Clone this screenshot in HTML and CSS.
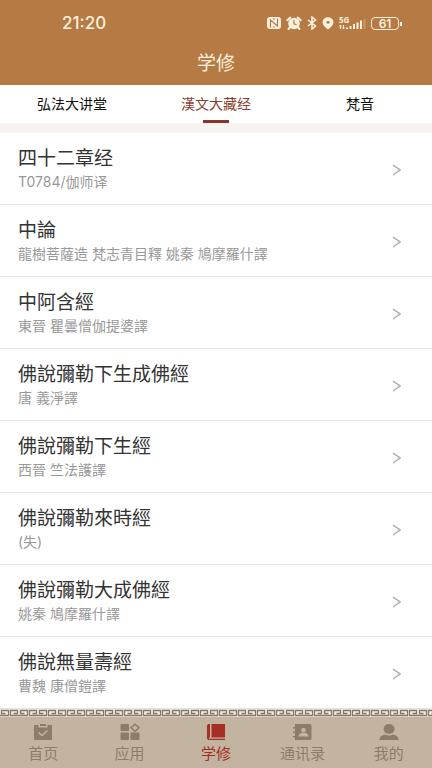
FILE: index.html
```html
<!DOCTYPE html>
<html lang="zh">
<head>
<meta charset="utf-8">
<meta name="viewport" content="width=device-width, initial-scale=1">
<title>学修</title>
<link rel="stylesheet" href="styles.css">
</head>
<body>
<div class="app">
  <header class="header">
    <div class="status">
      <time class="clock">21:20</time>
      <div class="indicators">
        <svg width="14" height="12" viewBox="0 0 14 12" aria-hidden="true"><rect width="14" height="12" rx="3" fill="#fdf0dc"/><path d="M3.500 10.500V3l7 6V1.500M6.500 1.500l1 1M6.500 9.500l1 1" fill="none" stroke="#b67a45" stroke-width="1.200"/></svg>
        <svg width="16" height="14" viewBox="0 0 16 14" aria-hidden="true"><circle cx="8" cy="7.500" r="5.800" fill="#fdf0dc"/><path d="M1.300 4.200 4.300 1.500M14.700 4.200 11.700 1.500M4 11.500 2.500 13M12 11.500l1.500 1.500" stroke="#fdf0dc" stroke-width="2" stroke-linecap="round"/><path d="M8 4.200v3.600l2.500 1" fill="none" stroke="#b67a45" stroke-width="1.200"/></svg>
        <svg width="10" height="14" viewBox="0 0 10 14" aria-hidden="true"><path d="M1 4l7.500 6L5 13V1l3.500 3L1 10" fill="none" stroke="#fdf0dc" stroke-width="1.600"/></svg>
        <svg width="12" height="13" viewBox="0 0 12 13" aria-hidden="true"><path d="M6 12.500C3 10 .5 8 .5 5.200a5.500 4.900 0 0 1 11 0C11.500 8 9 10 6 12.500z" fill="#fdf0dc"/><circle cx="6" cy="5.200" r="1.500" fill="#b67a45"/></svg>
        <svg class="signal" width="27" height="18" viewBox="0 0 27 18" aria-label="5G"><text x="0" y="9" class="signal-text">5G</text><path d="M1.500 11v4M4.500 11v4M.5 12h2M3.500 14h2" stroke="#fdf0dc" stroke-width="1.200"/><path d="M8 13.500V15M11.500 12v3M15 10v5M18.500 8.500V15M22 6.500V15" stroke="#fdf0dc" stroke-width="2"/><path d="M25.500 5v10" stroke="#c99a6b" stroke-width="2"/></svg>
        <span class="battery">61</span>
      </div>
    </div>
    <h1 class="title">学修</h1>
  </header>
  <nav class="tabs">
    <a class="tab" href="#lectures">弘法大讲堂</a>
    <a class="tab tab-active" href="#canon" aria-current="page">漢文大藏经</a>
    <a class="tab" href="#music">梵音</a>
  </nav>
  <main class="list">
    <a class="row" href="#1"><span class="text"><span class="name">四十二章经</span><span class="author">T0784/伽师译</span></span><svg class="chevron" viewBox="0 0 9 12"><path d="M1 1l7 5-7 5"/></svg></a>
    <a class="row" href="#2"><span class="text"><span class="name">中論</span><span class="author">龍樹菩薩造 梵志青目釋 姚秦 鳩摩羅什譯</span></span><svg class="chevron" viewBox="0 0 9 12"><path d="M1 1l7 5-7 5"/></svg></a>
    <a class="row" href="#3"><span class="text"><span class="name">中阿含經</span><span class="author">東晉 瞿曇僧伽提婆譯</span></span><svg class="chevron" viewBox="0 0 9 12"><path d="M1 1l7 5-7 5"/></svg></a>
    <a class="row" href="#4"><span class="text"><span class="name">佛說彌勒下生成佛經</span><span class="author">唐 義淨譯</span></span><svg class="chevron" viewBox="0 0 9 12"><path d="M1 1l7 5-7 5"/></svg></a>
    <a class="row" href="#5"><span class="text"><span class="name">佛說彌勒下生經</span><span class="author">西晉 竺法護譯</span></span><svg class="chevron" viewBox="0 0 9 12"><path d="M1 1l7 5-7 5"/></svg></a>
    <a class="row" href="#6"><span class="text"><span class="name">佛說彌勒來時經</span><span class="author">(失)</span></span><svg class="chevron" viewBox="0 0 9 12"><path d="M1 1l7 5-7 5"/></svg></a>
    <a class="row" href="#7"><span class="text"><span class="name">佛說彌勒大成佛經</span><span class="author">姚秦 鳩摩羅什譯</span></span><svg class="chevron" viewBox="0 0 9 12"><path d="M1 1l7 5-7 5"/></svg></a>
    <a class="row" href="#8"><span class="text"><span class="name">佛說無量壽經</span><span class="author">曹魏 康僧鎧譯</span></span><svg class="chevron" viewBox="0 0 9 12"><path d="M1 1l7 5-7 5"/></svg></a>
  </main>
  <footer class="footer">
    <svg class="fret" aria-hidden="true">
      <defs><pattern id="key" width="19" height="8" patternUnits="userSpaceOnUse"><path d="M0 6.500H8.500V1.500H1.500V4.500H5.500M19 6.500H10.500V1.500H17.500V4.500H13.500" fill="none" stroke="#857868" stroke-width="1.300"/></pattern></defs>
      <rect width="100%" height="8" fill="url(#key)"/>
    </svg>
    <nav class="bar">
      <a class="item" href="#home"><svg class="icon" viewBox="0 0 20 18"><path d="M2 2h3.500v2.500h9V2H18a1 1 0 0 1 1 1v13a1 1 0 0 1-1 1H2a1 1 0 0 1-1-1V3a1 1 0 0 1 1-1zM7 1h6v2H7z"/><path class="cut" d="M5.500 9.500l3.500 3 5.500-5"/></svg>首页</a>
      <a class="item" href="#apps"><svg class="icon" viewBox="0 0 20 18"><rect x="0.500" y="1" width="8.500" height="7" rx="1"/><rect x="0.500" y="9.500" width="8.500" height="7.500" rx="1"/><rect x="10.500" y="9.500" width="9" height="7.500" rx="1"/><path d="M15 1.200l4 3.500-4 3.500-4-3.500z" fill="none" stroke="currentColor" stroke-width="1.500"/></svg>应用</a>
      <a class="item item-active" href="#study" aria-current="page"><svg class="icon" viewBox="0 0 20 18"><path d="M5.500 1H19v13.500H5.500zM1 3a2 2 0 0 1 2-2h1v13.500H3v1.200h16V17H3a2 2 0 0 1-2-2z"/></svg>学修</a>
      <a class="item" href="#contacts"><svg class="icon" viewBox="0 0 20 18"><path d="M3 1h15a1.500 1.500 0 0 1 1.500 1.500v13A1.500 1.500 0 0 1 18 17H3v-2.500H1V13h2v-3H1V8.500h2v-3H1V4h2z"/><circle cx="11.500" cy="7" r="2.300" fill="#c3b4a2"/><path d="M6.500 13.500c.3-3 2.500-4 5-4s4.700 1 5 4z" fill="#c3b4a2"/></svg>通讯录</a>
      <a class="item" href="#me"><svg class="icon" viewBox="0 0 20 18"><ellipse cx="10" cy="6" rx="5.500" ry="5"/><path d="M.5 17c0-3 2-5 5.500-5.500 2.500 1.300 5.500 1.300 8 0 3.500.5 5.500 2.500 5.500 5.500z"/></svg>我的</a>
    </nav>
  </footer>
</div>
</body>
</html>
```
FILE: styles.css
```css
* {
  box-sizing: border-box;
}

body {
  margin: 0;
  background: #fff;
  font-family: "Noto Sans CJK SC", sans-serif;
}

a {
  color: inherit;
  text-decoration: none;
}

.app {
  display: flex;
  flex-direction: column;
  min-height: 100vh;
}

.header {
  background: #b67a45;
  color: #fdf0dc;
}

.status {
  display: flex;
  align-items: center;
  justify-content: space-between;
  height: 46px;
  padding: 0 33px 0 62px;
}

.clock {
  font: 500 17px/24px Inter, sans-serif;
}

.indicators {
  display: flex;
  align-items: center;
  gap: 5px;
}

.signal-text {
  font: 700 8px "Noto Sans", sans-serif;
  fill: #fdf0dc;
}

.battery {
  position: relative;
  width: 28px;
  border: 1px solid #fdf0dc;
  border-radius: 4px;
  font: 600 12px/11px Inter, sans-serif;
  text-align: center;
}

.battery::after {
  content: "";
  position: absolute;
  top: 4px;
  right: -4px;
  width: 2px;
  height: 4px;
  background: #fdf0dc;
}

.title {
  margin: 0;
  padding-bottom: 7px;
  font-size: 19px;
  font-weight: 400;
  line-height: 32px;
  text-align: center;
}

.tabs {
  display: grid;
  grid-template-columns: repeat(3, 1fr);
  border-bottom: 10px solid #f7f3ee;
}

.tab {
  display: flex;
  flex-direction: column;
  align-items: center;
  padding-top: 1px;
  color: #111;
  font-size: 14px;
  line-height: 34px;
}

.tab::after {
  content: "";
  width: 26px;
  height: 3px;
}

.tab-active {
  color: #8b3f2e;
}

.tab-active::after {
  background: #8b322b;
}

.list {
  flex: 1;
  font-family: Inter, "Noto Sans CJK TC", sans-serif;
}

.row {
  display: flex;
  align-items: center;
  justify-content: space-between;
  padding: 14px 31px 11px 18px;
  border-bottom: 1px solid #e5e3da;
}

.text {
  display: flex;
  flex-direction: column;
}

.name {
  color: #333;
  font-size: 19px;
  line-height: 24px;
}

.author {
  color: #999;
  font-size: 14px;
  line-height: 22px;
}

.chevron {
  width: 9px;
  height: 12px;
  fill: none;
  stroke: #aaa;
  stroke-width: 1.5;
}

.footer {
  background: #c3b4a2;
  color: #8c7d69;
}

.fret {
  display: block;
  width: 100%;
  height: 8px;
  background: #f3eee6;
}

.bar {
  display: grid;
  grid-template-columns: repeat(5, 1fr);
}

.item {
  display: flex;
  flex-direction: column;
  align-items: center;
  padding: 6px 0 3px;
  font-size: 15px;
  line-height: 24px;
}

.item-active {
  color: #a72e25;
}

.icon {
  width: 20px;
  height: 18px;
  fill: currentColor;
}

.cut {
  fill: none;
  stroke: #c3b4a2;
  stroke-width: 1.5;
}
```
